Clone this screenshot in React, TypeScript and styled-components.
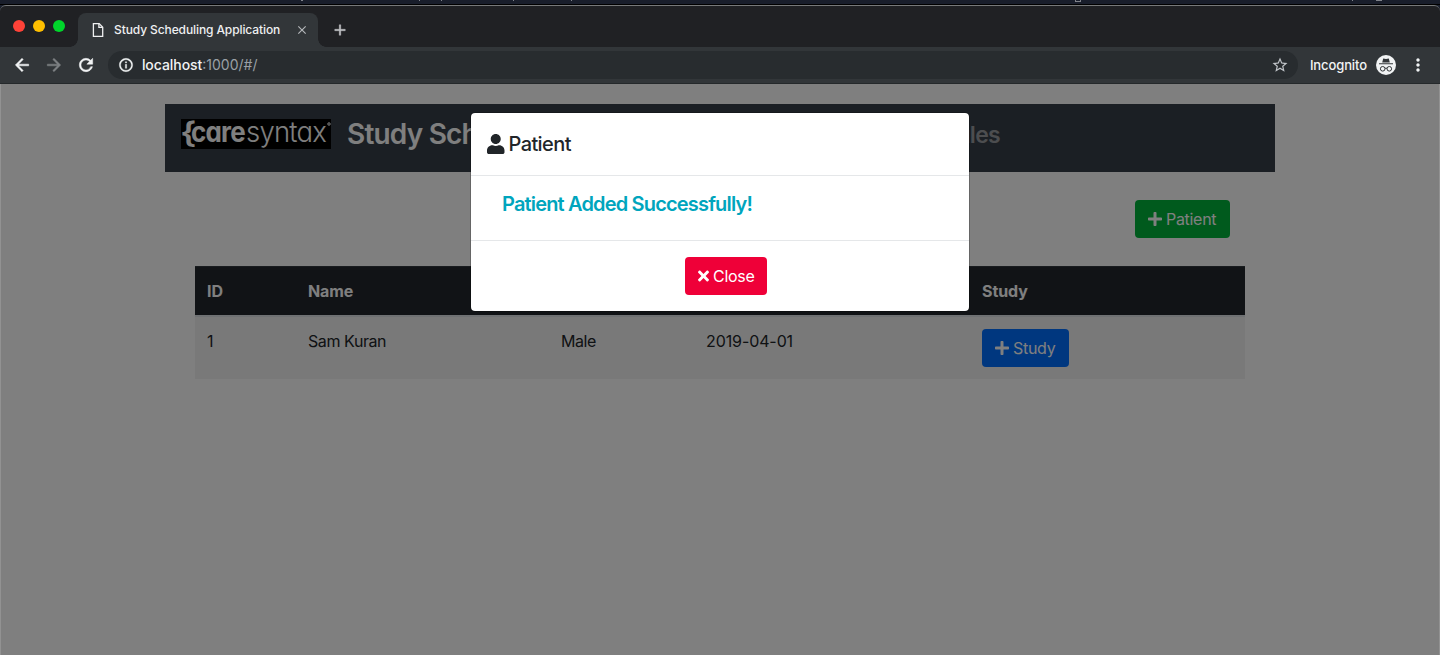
import React from 'react';
import styled, { createGlobalStyle } from 'styled-components';
import { FaPlus, FaTimes, FaUser } from 'react-icons/fa';
import {
  MdArrowBack,
  MdArrowForward,
  MdClose,
  MdAdd,
  MdInfoOutline,
  MdMoreVert,
  MdRefresh,
  MdStarBorder,
} from 'react-icons/md';

const GlobalStyle = createGlobalStyle`
  *, *::before, *::after { box-sizing: border-box; }
  html, body { margin: 0; height: 100%; overflow: hidden; }
  body {
    font-family: Inter, "Liberation Sans", sans-serif;
    font-size: 16px;
    line-height: 24px;
    color: #212529;
    background: #1a1f2c;
    letter-spacing: -0.35px;
  }
  svg { flex: none; display: block; }
`;

const Screen = styled.div`
  height: 655px;
  display: flex;
  flex-direction: column;
`;

const DesktopStrip = styled.div`
  height: 5px;
  flex: none;
  background: #191e2b;
  border-bottom: 1px solid #000;
`;

const BrowserWindow = styled.div`
  flex: 1;
  display: flex;
  flex-direction: column;
  overflow: hidden;
  border-top: 1px solid #77797a;
  border-radius: 6px 6px 0 0;
  background: #202124;
`;

const TabStrip = styled.div`
  height: 41px;
  flex: none;
  display: flex;
  align-items: flex-end;
`;

const TrafficLights = styled.div`
  display: flex;
  gap: 8px;
  padding: 0 13px 15px 13px;
`;

const Light = styled.span<{ $color: string }>`
  width: 12px;
  height: 12px;
  border-radius: 50%;
  background: ${(p) => p.$color};
`;

const Tab = styled.div`
  position: relative;
  width: 240px;
  height: 34px;
  display: flex;
  align-items: center;
  padding: 0 9px 0 12px;
  border-radius: 8px 8px 0 0;
  background: #323639;
  color: #eff0f1;
  &::before, &::after {
    content: '';
    position: absolute;
    bottom: 0;
    width: 8px;
    height: 8px;
  }
  &::before {
    left: -8px;
    background: radial-gradient(circle at 0 0, transparent 7.5px, #323639 8px);
  }
  &::after {
    right: -8px;
    background: radial-gradient(circle at 100% 0, transparent 7.5px, #323639 8px);
  }
`;

const TabTitle = styled.span`
  flex: 1;
  margin-left: 8px;
  font-size: 12px;
  font-weight: 500;
  letter-spacing: -0.1px;
  line-height: 16px;
  white-space: nowrap;
`;

const NewTab = styled.div`
  padding: 0 0 8px 13px;
  color: #c4c6c9;
  path:not([fill='none']) { stroke: currentColor; stroke-width: 0.5px; }
`;

const Toolbar = styled.div`
  height: 37px;
  flex: none;
  display: flex;
  align-items: center;
  padding: 0 12px 1px 12px;
  background: #323639;
  border-bottom: 1px solid #25292b;
  color: #f1f3f4;
`;

const NavButtons = styled.div`
  display: flex;
  gap: 12px;
  width: 96px;
  path:not([fill='none']) { stroke: currentColor; stroke-width: 0.6px; }
`;

const Dimmed = styled.span`
  color: #7d8083;
`;

const AddressBar = styled.div`
  flex: none;
  width: 1190px;
  height: 28px;
  display: flex;
  align-items: center;
  justify-content: space-between;
  padding: 0 9px 0 10px;
  border-radius: 14px;
  background: #282c2f;
`;

const Address = styled.div`
  display: flex;
  align-items: center;
  gap: 8px;
  font-size: 14px;
  letter-spacing: 0;
  line-height: 20px;
  path:not([fill='none']) { stroke: currentColor; stroke-width: 0.5px; }
`;

const AddressHost = styled.span`
  font-weight: 500;
  letter-spacing: -0.05px;
`;

const AddressPath = styled.span`
  color: #9aa0a6;
`;

const Profile = styled.div`
  display: flex;
  align-items: center;
  gap: 9px;
  margin-left: 12px;
  font-size: 13px;
  font-weight: 500;
  letter-spacing: -0.1px;
`;

const MenuButton = styled.div`
  margin-left: 12px;
`;

const Viewport = styled.main`
  position: relative;
  flex: 1;
  padding-top: 20px;
  background: #fff;
`;

const Container = styled.div`
  width: 1110px;
  margin: 0 auto;
`;

const Navbar = styled.nav`
  height: 68px;
  display: flex;
  align-items: flex-start;
  padding: 15px 16px 0;
  background: #363e48;
  white-space: nowrap;
`;

const Brand = styled.span`
  margin-left: 16px;
  width: 520px;
  font-size: 28px;
  font-weight: 600;
  line-height: 31px;
  letter-spacing: -0.8px;
  color: #fff;
`;

const NavLink = styled.span`
  width: 133px;
  text-align: right;
  font-size: 23px;
  font-weight: 600;
  line-height: 32px;
  letter-spacing: -0.7px;
  color: #999b9f;
`;

const Content = styled.div`
  padding: 0 30px;
`;

const Actions = styled.div`
  display: flex;
  justify-content: flex-end;
  padding: 28px 15px;
`;

const Button = styled.button<{ $color: string; $width: number }>`
  width: ${(p) => p.$width}px;
  height: 38px;
  display: flex;
  align-items: center;
  gap: 4px;
  padding: 0 0 0 13px;
  border: 0;
  border-radius: 4px;
  background: ${(p) => p.$color};
  color: #fff;
  font: inherit;
  letter-spacing: -0.3px;
  white-space: nowrap;
`;

const PlusIcon = styled(FaPlus)`
  width: 14px;
  height: 16px;
`;

const TimesIcon = styled(FaTimes)`
  width: 11px;
  height: 16px;
`;

const UserIcon = styled(FaUser)`
  width: 17.5px;
  height: 20px;
`;

const Table = styled.div`
  width: 1050px;
`;

const Row = styled.div<{ $head?: boolean }>`
  display: grid;
  grid-template-columns: 101px 253px 145px 276px 275px;
  height: ${(p) => (p.$head ? 49 : 64)}px;
  background: ${(p) => (p.$head ? '#22262d' : '#f2f2f2')};
  color: ${(p) => (p.$head ? '#fff' : '#212529')};
  font-weight: ${(p) => (p.$head ? 700 : 400)};
  letter-spacing: ${(p) => (p.$head ? '-0.1px' : '-0.42px')};
  border-top: ${(p) => (p.$head ? '1px solid #32383e' : '2px solid #dee2e6')};
`;

const Cell = styled.div`
  padding: 12px 12px 0;
`;

const DateCell = styled(Cell)`
  letter-spacing: -0.1px;
`;

const Backdrop = styled.div`
  position: absolute;
  inset: 0;
  padding-top: 28px;
  border: solid #929292;
  border-width: 0 1px;
  background: rgba(0, 0, 0, 0.5);
`;

const Modal = styled.section`
  width: 500px;
  margin: 0 auto;
  border: 1px solid rgba(0, 0, 0, 0.2);
  border-radius: 5px;
  background: #fff;
  background-clip: padding-box;
`;

const ModalHeader = styled.header`
  height: 63px;
  display: flex;
  align-items: center;
  gap: 4px;
  padding-left: 16px;
  border-bottom: 1px solid #e5e7e9;
  font-size: 20px;
  font-weight: 500;
  letter-spacing: -0.6px;
`;

const ModalBody = styled.div`
  height: 64px;
  padding: 16px 31px;
  font-size: 20px;
  font-weight: 600;
  letter-spacing: -0.83px;
  color: #00a5bd;
`;

const ModalFooter = styled.footer`
  display: flex;
  justify-content: center;
  padding: 16px 0 16px 12px;
  border-top: 1px solid #e5e7e9;
`;

const BrandLogo = () => (
  <svg width="150" height="30" viewBox="0 0 150 30" fontFamily="Inter, sans-serif" fill="#fff">
    <rect width="150" height="30" fill="#000" />
    <text x="-1" y="23.5" fontSize="29" fontWeight="600" textLength="16" lengthAdjust="spacingAndGlyphs">{'{'}</text>
    <g style={{ fontFeatureSettings: '"cv11"' }} fontSize="28" letterSpacing="-0.8">
      <text x="10" y="23" fontWeight="700" textLength="54" lengthAdjust="spacingAndGlyphs">care</text>
      <text x="65" y="23" fontWeight="300" textLength="80" lengthAdjust="spacingAndGlyphs">syntax</text>
    </g>
    <circle cx="148" cy="5" r="1.4" fill="#888" stroke="#fff" strokeWidth="0.6" />
  </svg>
);

const PageIcon = () => (
  <svg width="16" height="16" viewBox="0 0 16 16" fill="none" stroke="currentColor" strokeWidth="1.3">
    <path d="M3.4 1.6h5.8l3.5 3.6v9.2H3.4z" />
    <path d="M8.9 1.8v3.6h3.6" />
  </svg>
);

const IncognitoBadge = () => (
  <svg width="20" height="20" viewBox="0 0 20 20">
    <circle cx="10" cy="10" r="10" fill="#f1f3f4" />
    <path d="M7.2 3.4 10 4l2.8-.6 1 4H6.2z" fill="#323639" />
    <path d="M3 8.2h14v1.1H3z" fill="#323639" />
    <g fill="none" stroke="#323639" strokeWidth="1">
      <circle cx="6.7" cy="13.8" r="2.3" />
      <circle cx="13.3" cy="13.8" r="2.3" />
      <path d="M9 13.4q1-.7 2 0" />
    </g>
  </svg>
);

const StripMarks = () => (
  <svg width="1440" height="3" viewBox="0 0 1440 3" fill="#80838a">
    <path d="M301 0h2v1h-2zM419 0h1v1h-1zM441 0h1v1h-1zM513 0h1v1h-1zM571 0h1v1h-1zM1075 0h1v1h4v-1h1v2h-6zM1352 0h1v1h-1zM1376 0h6v1h-6z" />
  </svg>
);

export default function App() {
  return (
    <Screen>
      <GlobalStyle />
      <DesktopStrip>
        <StripMarks />
      </DesktopStrip>
      <BrowserWindow>
        <TabStrip>
          <TrafficLights>
            <Light $color="#ff4238" />
            <Light $color="#ffbf00" />
            <Light $color="#00d62b" />
          </TrafficLights>
          <Tab>
            <PageIcon />
            <TabTitle>Study Scheduling Application</TabTitle>
            <MdClose size={14} color="#b4b7ba" />
          </Tab>
          <NewTab>
            <MdAdd size={18} />
          </NewTab>
        </TabStrip>
        <Toolbar>
          <NavButtons>
            <MdArrowBack size={20} />
            <Dimmed>
              <MdArrowForward size={20} />
            </Dimmed>
            <MdRefresh size={20} />
          </NavButtons>
          <AddressBar>
            <Address>
              <MdInfoOutline size={16} />
              <span>
                <AddressHost>localhost</AddressHost>
                <AddressPath>:1000/#/</AddressPath>
              </span>
            </Address>
            <MdStarBorder size={18} color="#c0c4c8" />
          </AddressBar>
          <Profile>
            Incognito
            <IncognitoBadge />
          </Profile>
          <MenuButton>
            <MdMoreVert size={20} />
          </MenuButton>
        </Toolbar>
        <Viewport>
          <Container>
            <Navbar>
              <BrandLogo />
              <Brand>Study Scheduling Application</Brand>
              <NavLink>Schedules</NavLink>
            </Navbar>
            <Content>
              <Actions>
                <Button $color="#00b53b" $width={95}>
                  <PlusIcon />
                  Patient
                </Button>
              </Actions>
              <Table>
                <Row $head>
                  <Cell>ID</Cell>
                  <Cell>Name</Cell>
                  <Cell>Gender</Cell>
                  <Cell>DOB</Cell>
                  <Cell>Study</Cell>
                </Row>
                <Row>
                  <Cell>1</Cell>
                  <Cell>Sam Kuran</Cell>
                  <Cell>Male</Cell>
                  <DateCell>2019-04-01</DateCell>
                  <Cell>
                    <Button $color="#006eff" $width={87}>
                      <PlusIcon />
                      Study
                    </Button>
                  </Cell>
                </Row>
              </Table>
            </Content>
          </Container>
          <Backdrop>
            <Modal>
              <ModalHeader>
                <UserIcon />
                Patient
              </ModalHeader>
              <ModalBody>Patient Added Successfully!</ModalBody>
              <ModalFooter>
                <Button $color="#ef0038" $width={82}>
                  <TimesIcon />
                  Close
                </Button>
              </ModalFooter>
            </Modal>
          </Backdrop>
        </Viewport>
      </BrowserWindow>
    </Screen>
  );
}
